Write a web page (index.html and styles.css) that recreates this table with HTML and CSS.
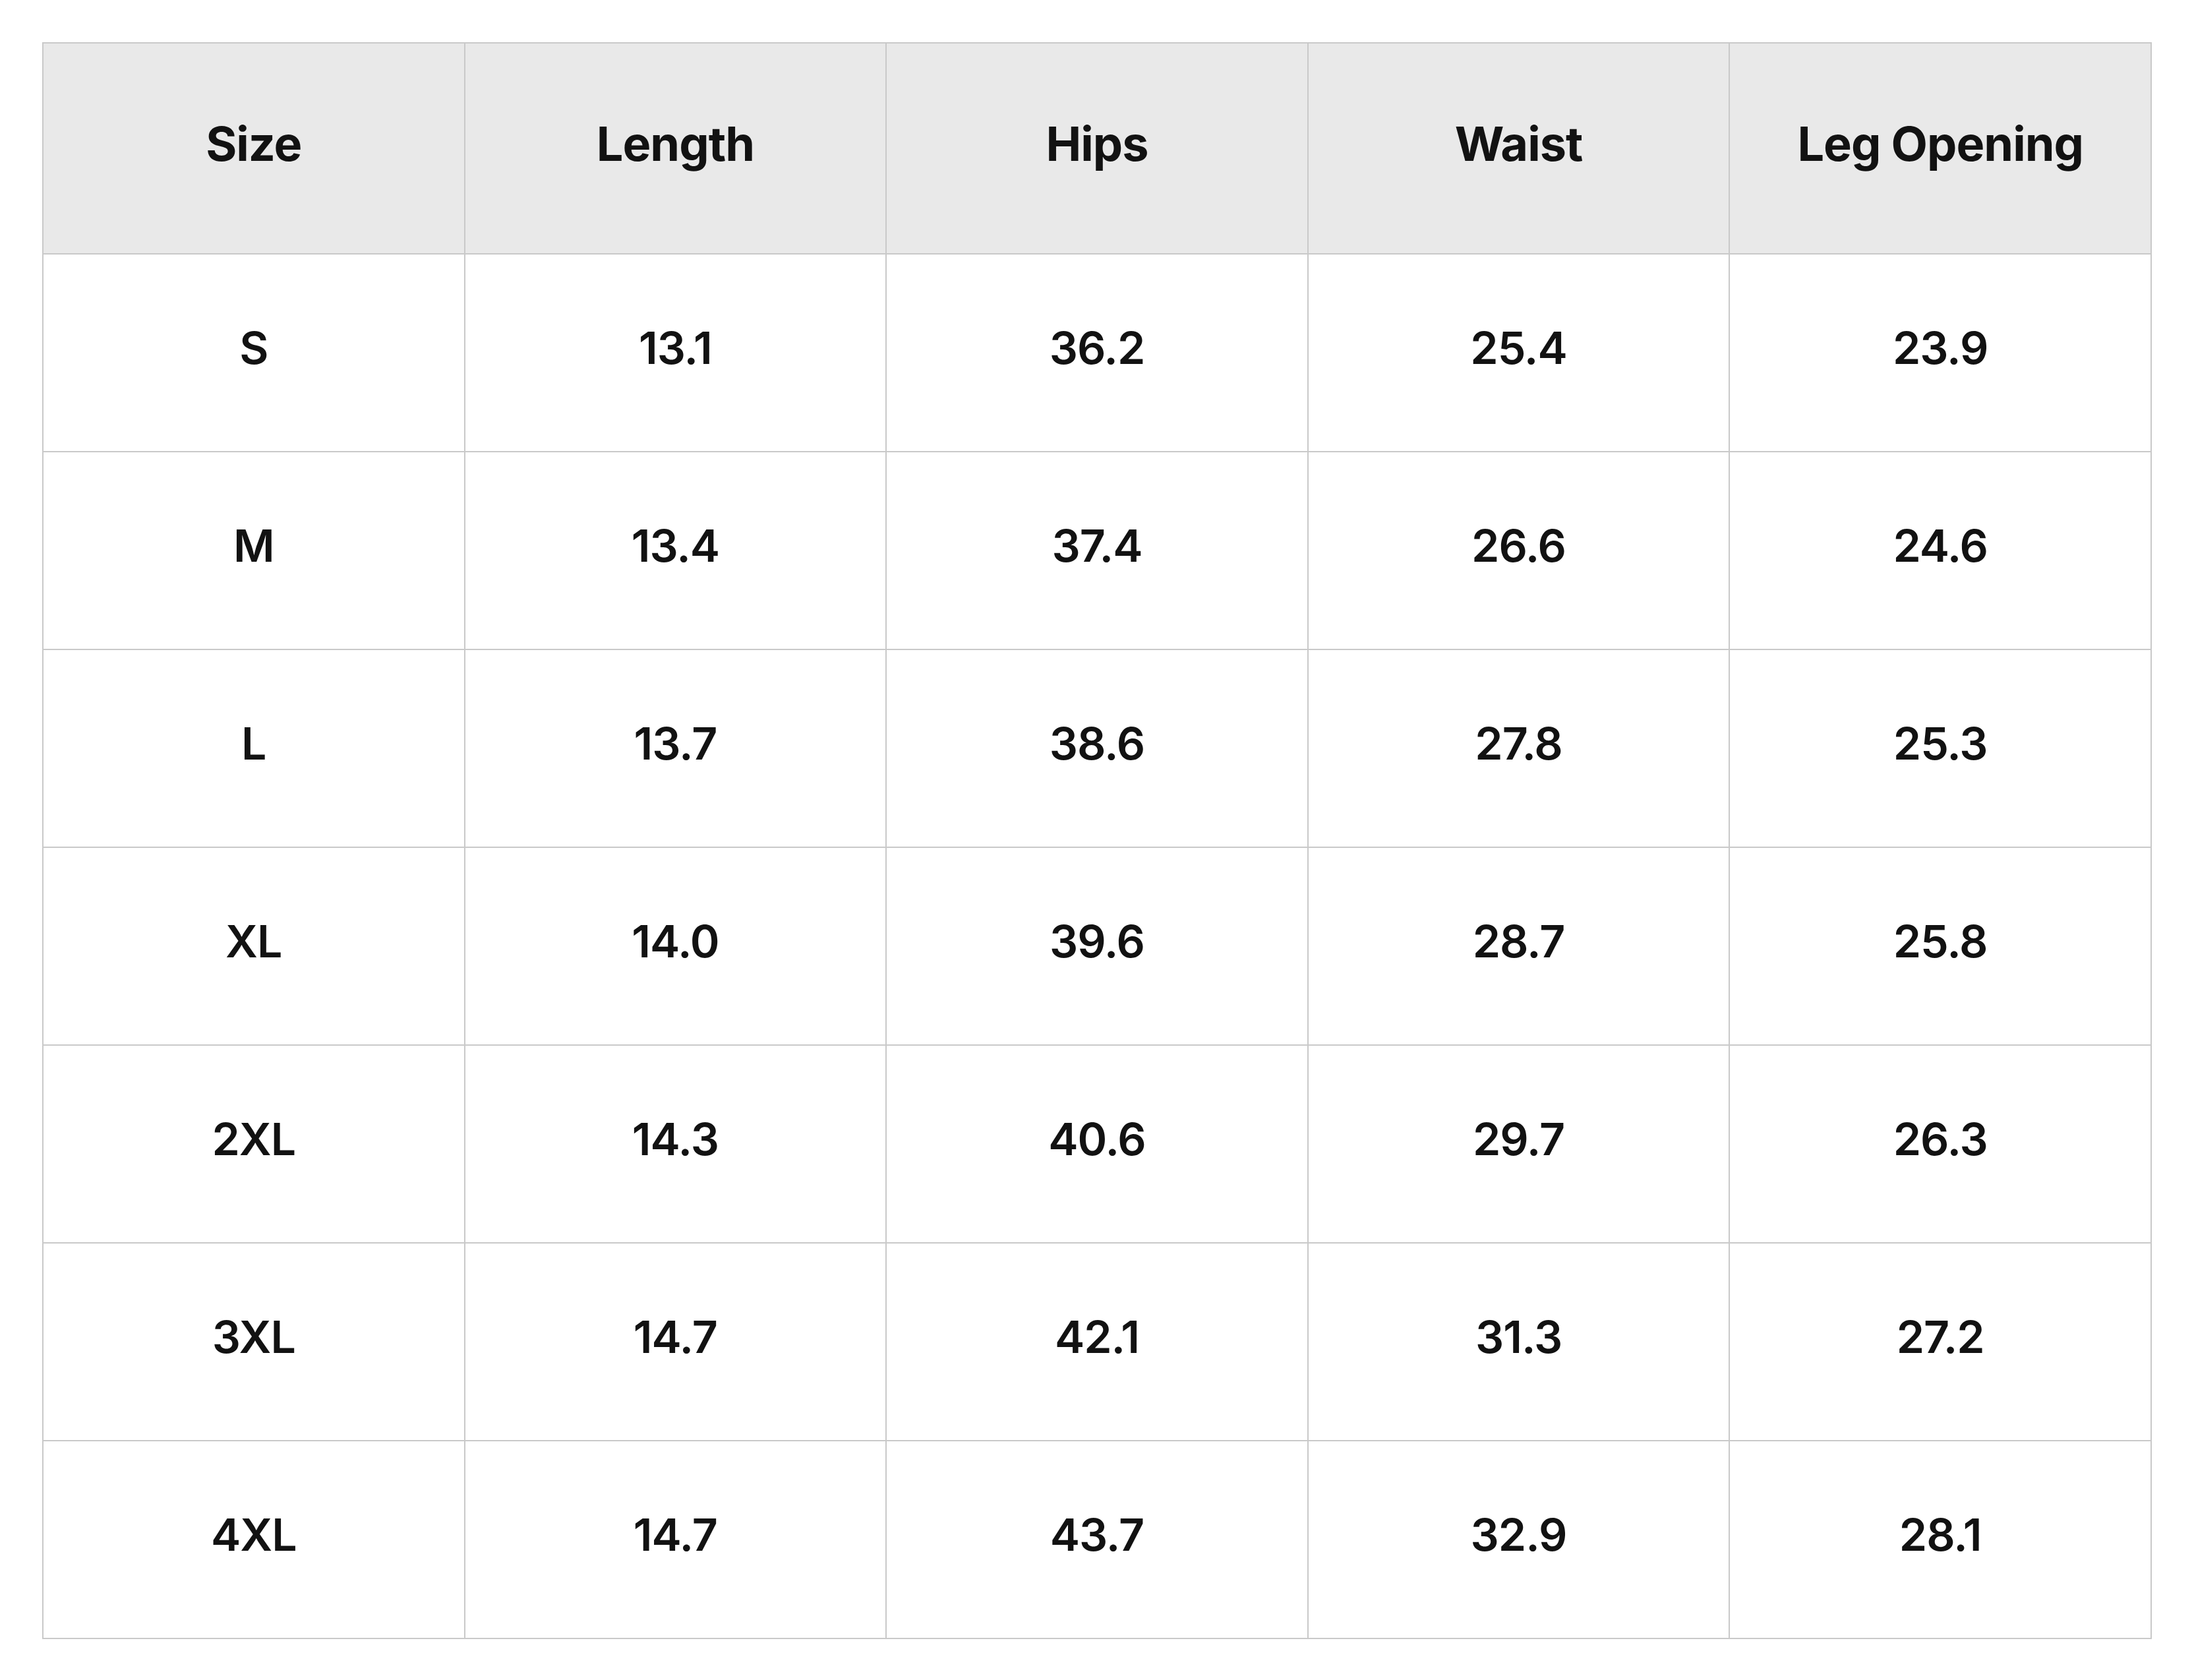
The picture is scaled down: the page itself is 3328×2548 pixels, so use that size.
FILE: index.html
```html
<!DOCTYPE html>
<html lang="en">
<head>
<meta charset="utf-8">
<title>Size Chart</title>
<link rel="stylesheet" href="styles.css">
</head>
<body>
<table class="size-table">
  <thead>
    <tr><th>Size</th><th>Length</th><th>Hips</th><th>Waist</th><th>Leg Opening</th></tr>
  </thead>
  <tbody>
    <tr><td>S</td><td>13.1</td><td>36.2</td><td>25.4</td><td>23.9</td></tr>
    <tr><td>M</td><td>13.4</td><td>37.4</td><td>26.6</td><td>24.6</td></tr>
    <tr><td>L</td><td>13.7</td><td>38.6</td><td>27.8</td><td>25.3</td></tr>
    <tr><td>XL</td><td>14.0</td><td>39.6</td><td>28.7</td><td>25.8</td></tr>
    <tr><td>2XL</td><td>14.3</td><td>40.6</td><td>29.7</td><td>26.3</td></tr>
    <tr><td>3XL</td><td>14.7</td><td>42.1</td><td>31.3</td><td>27.2</td></tr>
    <tr><td>4XL</td><td>14.7</td><td>43.7</td><td>32.9</td><td>28.1</td></tr>
  </tbody>
</table>
</body>
</html>
```

FILE: styles.css
```css
html, body {
  margin: 0;
  padding: 0;
  background: #ffffff;
}
body {
  padding: 64px;
  font-family: Inter, "Noto Sans", "Liberation Sans", sans-serif;
  color: #121212;
}
.size-table {
  width: 3200px;
  border-collapse: collapse;
  table-layout: fixed;
}
.size-table th,
.size-table td {
  border: 2px solid #c9c9c9;
  text-align: center;
  vertical-align: middle;
  padding: 0 0 16px 0;
}
.size-table th {
  height: 302px;
  background: #e9e9e9;
  font-size: 72px;
  font-weight: 700;
  letter-spacing: -1px;
}
.size-table td {
  height: 282px;
  font-size: 68px;
  font-weight: 600;
  letter-spacing: -1px;
}
```
